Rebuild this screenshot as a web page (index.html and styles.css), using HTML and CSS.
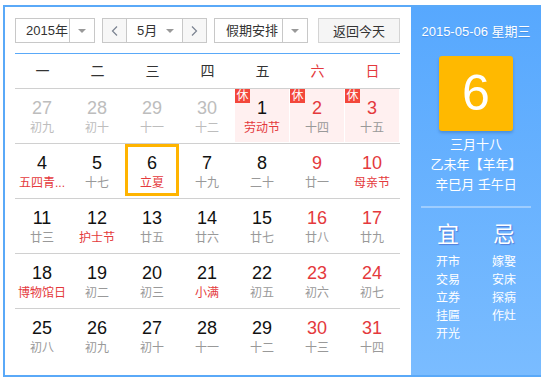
FILE: index.html
```html
<!DOCTYPE html>
<html lang="zh-CN">
<head>
  <meta charset="UTF-8" />
  <meta name="viewport" content="width=device-width, initial-scale=1.0" />
  <title>万年历</title>
  <link rel="stylesheet" href="styles.css">
</head>
<body>
  <div class="calendar">
    <div class="main">
      <div class="toolbar">
        <div class="select year-select">
          <span class="select-text">2015年</span>
          <span class="select-arrow"><i class="caret"></i></span>
        </div>
        <div class="month-group">
          <button class="nav-btn">
            <svg width="7" height="10" viewBox="0 0 7 10"><polyline points="6,0.5 1.5,5 6,9.5" fill="none" stroke="#7a8290" stroke-width="1.2"/></svg>
          </button>
          <div class="month-select">
            <span class="select-text">5月</span>
            <i class="caret"></i>
          </div>
          <button class="nav-btn">
            <svg width="7" height="10" viewBox="0 0 7 10"><polyline points="1,0.5 5.5,5 1,9.5" fill="none" stroke="#7a8290" stroke-width="1.2"/></svg>
          </button>
        </div>
        <div class="select holiday-select">
          <span class="select-text">假期安排</span>
          <span class="select-arrow"><i class="caret"></i></span>
        </div>
        <button class="today-btn">返回今天</button>
      </div>

      <div class="week-head">
        <span>一</span><span>二</span><span>三</span><span>四</span><span>五</span>
        <span class="weekend">六</span><span class="weekend">日</span>
      </div>
      <div id="grid" class="grid"></div>
    </div>

    <div class="side">
      <div class="side-date">2015-05-06 星期三</div>
      <div class="big-day">6</div>
      <div class="lunar-info">
        <p>三月十八</p>
        <p>乙未年【羊年】</p>
        <p>辛巳月 壬午日</p>
      </div>
      <div class="side-line"></div>
      <div class="almanac">
        <div class="almanac-col">
          <h3>宜</h3>
          <p>开市</p><p>交易</p><p>立券</p><p>挂匾</p><p>开光</p>
        </div>
        <div class="almanac-col">
          <h3>忌</h3>
          <p>嫁娶</p><p>安床</p><p>探病</p><p>作灶</p>
        </div>
      </div>
    </div>
  </div>

  <script>
    // p = 上月, f = 节日, r = 休, t = 今天
    const days = [
      [27, '初九', 'p'], [28, '初十', 'p'], [29, '十一', 'p'], [30, '十二', 'p'], [1, '劳动节', 'fr'], [2, '十四', 'r'], [3, '十五', 'r'],
      [4, '五四青...', 'f'], [5, '十七', ''], [6, '立夏', 'ft'], [7, '十九', ''], [8, '二十', ''], [9, '廿一', ''], [10, '母亲节', 'f'],
      [11, '廿三', ''], [12, '护士节', 'f'], [13, '廿五', ''], [14, '廿六', ''], [15, '廿七', ''], [16, '廿八', ''], [17, '廿九', ''],
      [18, '博物馆日', 'f'], [19, '初二', ''], [20, '初三', ''], [21, '小满', 'f'], [22, '初五', ''], [23, '初六', ''], [24, '初七', ''],
      [25, '初八', ''], [26, '初九', ''], [27, '初十', ''], [28, '十一', ''], [29, '十二', ''], [30, '十三', ''], [31, '十四', '']
    ];

    const grid = document.getElementById('grid');
    let html = '';
    for (let r = 0; r < days.length / 7; r++) {
      html += '<div class="week-row">';
      for (let c = 0; c < 7; c++) {
        const [num, lunar, flags] = days[r * 7 + c];
        let cls = 'day';
        if (flags.includes('p')) cls += ' prev';
        if (flags.includes('r')) cls += ' rest';
        if (flags.includes('t')) cls += ' today';
        if (c >= 5) cls += ' weekend';
        const lunarCls = flags.includes('f') ? 'lunar festival' : 'lunar';
        const badge = flags.includes('r') ? '<span class="badge">休</span>' : '';
        html += `<div class="cell"><div class="${cls}">${badge}<div class="num">${num}</div><div class="${lunarCls}">${lunar}</div></div></div>`;
      }
      html += '</div>';
    }
    grid.innerHTML = html;
  </script>
</body>
</html>
```

FILE: styles.css
```css
* {
  margin: 0;
  padding: 0;
  box-sizing: border-box;
  font-family: "Liberation Sans", "Noto Sans CJK SC", sans-serif;
}
body {
  background: #fff;
}
.calendar {
  display: flex;
  width: 538px;
  height: 372px;
  margin: 5px 0 0 3px;
  border: 2px solid #5aa9f8;
  border-right: none;
}
.main {
  width: 406px;
  padding: 11px 11px 0 10px;
  background: #fff;
}

/* toolbar */
.toolbar {
  display: flex;
  height: 25px;
  margin-bottom: 10px;
}
.select {
  display: flex;
  border: 1px solid #c8c8c8;
  background: #fff;
  font-size: 13px;
  color: #333;
}
.select-text {
  flex: 1;
  line-height: 23px;
  padding-left: 10px;
}
.select-arrow {
  width: 25px;
  border-left: 1px solid #c8c8c8;
  display: flex;
  align-items: center;
  justify-content: center;
}
.caret {
  display: block;
  width: 0;
  height: 0;
  border-left: 4px solid transparent;
  border-right: 4px solid transparent;
  border-top: 4px solid #999;
}
.year-select {
  width: 80px;
}
.holiday-select {
  width: 94px;
  margin-left: 7px;
}
.holiday-select .select-text {
  padding-left: 11px;
}
.month-group {
  display: flex;
  width: 105px;
  margin-left: 7px;
  border: 1px solid #c8c8c8;
}
.nav-btn {
  width: 23px;
  border: none;
  background: #f7f7f7;
  display: flex;
  align-items: center;
  justify-content: center;
}
.month-select {
  flex: 1;
  display: flex;
  align-items: center;
  border-left: 1px solid #c8c8c8;
  border-right: 1px solid #c8c8c8;
  background: #fff;
  font-size: 13px;
  color: #333;
  padding: 0 8px 0 10px;
}
.month-select .select-text {
  padding-left: 0;
}
.today-btn {
  width: 82px;
  margin-left: 10px;
  border: 1px solid #d4d4d4;
  background: #f5f5f5;
  font-size: 13px;
  color: #333;
}

/* grid */
.week-head {
  display: flex;
  height: 35px;
  border-top: 1px solid #5aa9f8;
  font-size: 14px;
  color: #333;
}
.week-head span {
  width: 55px;
  line-height: 34px;
  text-align: center;
}
.week-head .weekend {
  color: #e4393c;
}
.week-row {
  display: flex;
  height: 55px;
  border-top: 1px solid #d0d0d0;
}
.cell {
  width: 55px;
}
.day {
  position: relative;
  width: 54px;
  height: 53px;
  padding-top: 8px;
  text-align: center;
}
.num {
  font-size: 18px;
  line-height: 22px;
  color: #111;
}
.lunar {
  font-size: 12px;
  line-height: 18px;
  color: #999;
  white-space: nowrap;
}
.weekend .num {
  color: #e4393c;
}
.festival {
  color: #e4393c;
}
.prev .num,
.prev .lunar {
  color: #bdbdbd;
}
.rest {
  background: #fff0f0;
}
.badge {
  position: absolute;
  left: 0;
  top: 0;
  width: 15px;
  height: 14px;
  background: #f3473b;
  color: #fff;
  font-size: 12px;
  line-height: 14px;
  text-align: center;
}
.today {
  height: 52px;
  box-shadow: inset 0 0 0 3px #ffb400;
}

/* side panel */
.side {
  width: 130px;
  background: linear-gradient(#57a8fe, #7abcff);
  color: #fff;
  text-align: center;
  padding-top: 15px;
}
.side-date {
  font-size: 13px;
  line-height: 20px;
  text-shadow: 0 1px 1px rgba(0, 60, 140, 0.2);
}
.big-day {
  width: 74px;
  height: 75px;
  margin: 14px auto 0;
  background: #ffb900;
  border-radius: 3px;
  box-shadow: 0 2px 3px rgba(0, 50, 120, 0.25);
  font-size: 50px;
  line-height: 75px;
}
.lunar-info {
  margin-top: 4px;
  font-size: 13px;
  line-height: 20px;
}
.side-line {
  width: 110px;
  height: 2px;
  margin: 11px auto 0;
  background: rgba(255, 255, 255, 0.35);
}
.almanac {
  display: flex;
  justify-content: center;
  margin-top: 12px;
}
.almanac-col {
  width: 56px;
}
.almanac-col h3 {
  font-size: 22px;
  font-weight: normal;
  line-height: 30px;
  margin-bottom: 3px;
  text-shadow: 1px 1px 1px rgba(40, 40, 160, 0.4);
}
.almanac-col p {
  font-size: 12px;
  line-height: 18px;
}
```
